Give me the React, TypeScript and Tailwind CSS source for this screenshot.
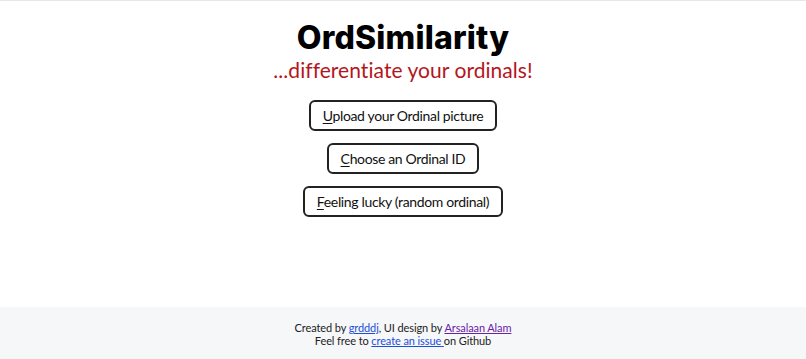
export default function App() {
  const buttons = [
    { key: 'U', rest: 'pload your Ordinal picture' },
    { key: 'C', rest: 'hoose an Ordinal ID' },
    { key: 'F', rest: 'eeling lucky (random ordinal)' },
  ]

  return (
    <div className="flex h-[359px] flex-col border-t border-gray-200 bg-white font-['Lato',sans-serif]">
      <main className="flex flex-1 flex-col items-center pt-[18px]">
        <h1 className="font-['Inter',sans-serif] text-[32px] font-extrabold leading-[38px] tracking-[0.2px] text-black">
          OrdSimilarity
        </h1>
        <p className="text-[21px] leading-[26px] tracking-[0.05px] text-[#b3161c]">
          ...differentiate your ordinals!
        </p>

        {/* Actions */}
        <div className="mt-[17px] flex flex-col items-center gap-[12px]">
          {buttons.map((b) => (
            <button
              key={b.key}
              className="h-[31px] rounded-[6px] border-2 border-[#222] bg-white px-[12px] text-[14px] leading-none tracking-[-0.35px] text-[#111]"
            >
              <span className="underline underline-offset-2">{b.key}</span>
              {b.rest}
            </button>
          ))}
        </div>
      </main>

      <footer className="flex h-[52px] flex-col items-center justify-center bg-[#f6f7f9] pt-[2px] text-[11px] leading-[13px] tracking-[-0.1px] text-[#222]">
        <p>
          Created by{' '}
          <a href="#" className="text-[#1d4ed8] underline">
            grdddj
          </a>
          , UI design by{' '}
          <a href="#" className="text-[#6b21a8] underline">
            Arsalaan Alam
          </a>
        </p>
        <p>
          Feel free to{' '}
          <a href="#" className="text-[#1d4ed8] underline">
            create an issue{' '}
          </a>
          on Github
        </p>
      </footer>
    </div>
  )
}
